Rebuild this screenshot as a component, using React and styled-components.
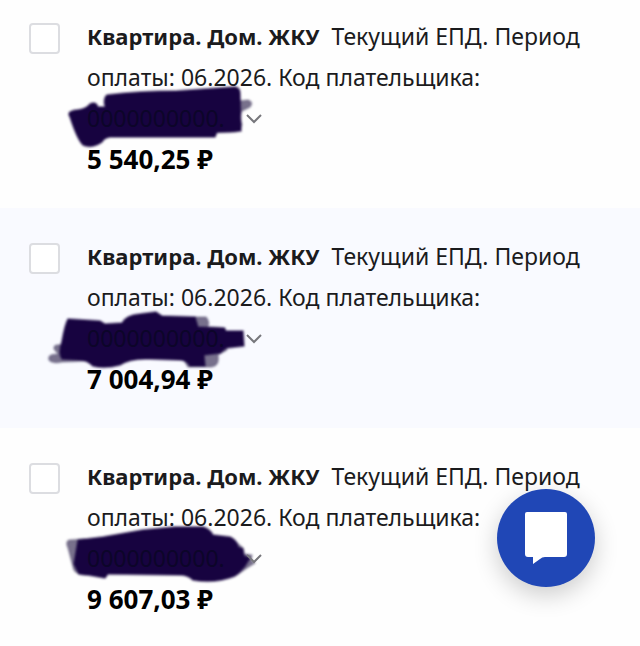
// Import React Libraries
import React from 'react';

// Import Style
import styled, { createGlobalStyle } from 'styled-components';

const textColor = '#1b1b1d';
const inkColor = '#170340';
const lineHeight = 41;

const GlobalStyle = createGlobalStyle`
  * {
    box-sizing: border-box;
  }

  body {
    margin: 0;
    background: #fefefe;
    color: ${textColor};
    font-family: 'Noto Sans', 'Open Sans', sans-serif;
  }
`;

const BillList = styled.ul`
  margin: 0;
  padding: 0;
  list-style: none;
`;

const BillRow = styled.li`
  display: flex;
  align-items: flex-start;
  gap: 27px;
  padding: 28px 48px 28px 29px;
  background: ${({ $shaded }) => ($shaded ? '#f9faff' : 'transparent')};

  &:first-child {
    padding-top: 16px;
  }

  &:last-child {
    padding-bottom: 16px;
  }
`;

const Checkbox = styled.input`
  appearance: none;
  flex: none;
  width: 31px;
  height: 31px;
  margin: 7px 0 0;
  border: 2px solid #dcdde1;
  border-radius: 4px;
  background: white;

  &:checked {
    background: #2148b8;
  }
`;

const BillBody = styled.div`
  flex: 1;
  min-width: 0;
  font-size: 23px;
  line-height: ${lineHeight}px;
`;

const BillLabel = styled.label`
  display: block;
`;

const BillTitle = styled.strong`
  margin-right: 6px;
  font-size: 22px;
  font-weight: 700;
`;

const CodeLine = styled.div`
  position: relative;
  display: flex;
  align-items: center;
  gap: 20px;
  height: ${lineHeight}px;
`;

const Code = styled.span`
  position: relative;
  color: #0c0529;
`;

const Ink = styled.svg`
  position: absolute;
  top: -14px;
  left: -47px;
  width: 240px;
  height: 70px;
  filter: blur(1px);
  pointer-events: none;
`;

const ExpandButton = styled.button`
  position: relative;
  display: flex;
  padding: 0;
  border: 0;
  background: none;
  color: #77777c;
`;

const Amount = styled.div`
  color: black;
  font-size: 26px;
  font-weight: 700;
`;

const ChatButton = styled.button`
  position: fixed;
  right: 45px;
  bottom: 59px;
  display: flex;
  align-items: center;
  justify-content: center;
  width: 98px;
  height: 98px;
  padding: 0;
  border: 0;
  border-radius: 50%;
  background: #2047b6;
  box-shadow: 0 8px 24px rgba(0, 0, 0, 0.2);
`;

// Payer codes stay hidden, only a stand-in is printed under the ink
const hiddenCode = '0000000000.';

const bills = [
  {
    id: 'bill-1',
    amount: '5 540,25 ₽',
    ink: 'M67 11 Q100 7 137 7 L195 3 Q200 4 200 9 L201 47 Q190 48 177 48 L175 53 L70 53 Q64 54 62 58 Q52 65 43 61 Q37 55 30 33 Q26 27 37 26 Q46 25 50 20 Q56 17 58 23 L65 23 Q63 14 67 11Z',
    smear: 'M199 17 L208 16 Q214 18 210 23 L202 27 L199 34 L202 40 Q201 48 194 48 L172 49 L175 40Z',
  },
  {
    id: 'bill-2',
    amount: '7 004,94 ₽',
    shaded: true,
    ink: 'M28 15 L60 17 L65 20 L82 19 Q86 11 100 10 L116 8 L122 12 L155 13 L158 23 L184 24 L186 27 L203 27 L204 42 L186 44 L180 49 L164 51 L165 62 L150 62 Q147 56 140 56 L110 55 Q90 54 80 61 Q65 65 53 62 Q47 56 40 56 L22 55 Q18 50 22 37 Q25 20 28 15Z',
    smear: 'M155 13 L166 13 Q170 17 168 23 L185 24 L187 46 L178 51 Q180 62 171 63 L148 63 L140 50Z M22 41 Q13 40 14 45 L18 50 Q7 50 9 56 Q12 60 22 58 L45 57Z',
  },
  {
    id: 'bill-3',
    amount: '9 607,03 ₽',
    ink: 'M38 16 L63 13 L103 6 L135 3 L163 3 Q170 5 173 11 L190 13 Q197 16 198 23 L203 25 L204 32 L210 34 L205 42 Q200 48 195 52 Q175 60 153 56 Q148 51 140 51 L68 50 L65 54 L48 51 L39 50 L34 40Z',
    smear: 'M45 15 L29 16 Q25 18 28 24 L33 43 Q34 51 48 51Z M196 18 L203 24 L204 30 L212 31 L211 36 L215 39 L207 44 L197 51Z',
  },
];

function Scribble ({ ink, smear }) {
  return (
    <Ink viewBox='0 0 240 70' aria-hidden='true'>
      <path d={smear} fill='#4b4266' fillOpacity='0.75' stroke='#4b4266' strokeOpacity='0.25' strokeWidth='2' strokeLinejoin='round'/>
      <path d={ink} fill={inkColor} stroke={inkColor} strokeOpacity='0.45' strokeWidth='2' strokeLinejoin='round'/>
    </Ink>
  );
}

function Bill ({ bill }) {
  return (
    <BillRow $shaded={bill.shaded}>
      <Checkbox type='checkbox' id={bill.id}/>
      <BillBody>
        <BillLabel htmlFor={bill.id}>
          <BillTitle>Квартира. Дом. ЖКУ</BillTitle>{' '}
          Текущий ЕПД. Период оплаты: 06.2026. Код плательщика:
        </BillLabel>
        <CodeLine>
          <Scribble ink={bill.ink} smear={bill.smear}/>
          <Code>{hiddenCode}</Code>
          <ExpandButton type='button' aria-label='Подробнее'>
            <svg width='18' height='12' viewBox='0 0 18 12' fill='none' stroke='currentColor' strokeWidth='2'>
              <path d='M2 2 L9 9 L16 2'/>
            </svg>
          </ExpandButton>
        </CodeLine>
        <Amount>{bill.amount}</Amount>
      </BillBody>
    </BillRow>
  );
}

function App () {
  return (
    <main>
      <GlobalStyle/>
      <BillList>
        {bills.map((bill) => <Bill key={bill.id} bill={bill}/>)}
      </BillList>
      <ChatButton type='button' aria-label='Чат'>
        <svg width='42' height='52' viewBox='0 0 42 52' fill='white'>
          <path d='M2 0 H40 Q42 0 42 2 V42 Q42 45 39 45 H20 Q17 45 15 47 L8 52 V45 H3 Q0 45 0 42 V2 Q0 0 2 0Z'/>
        </svg>
      </ChatButton>
    </main>
  );
}

export default App;
